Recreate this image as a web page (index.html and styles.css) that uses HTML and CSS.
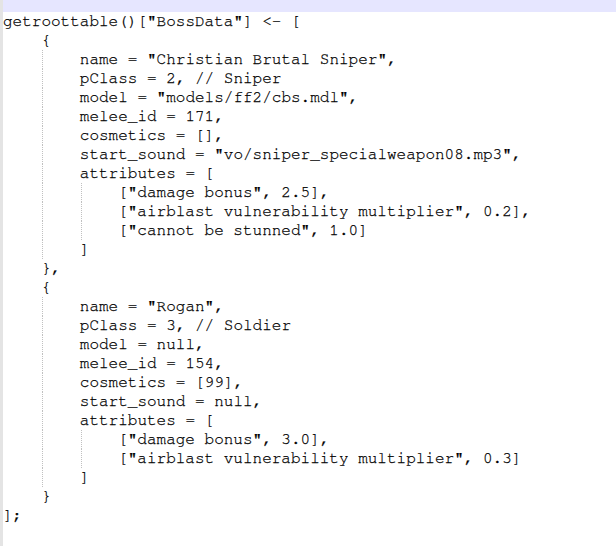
FILE: index.html
```html
<!DOCTYPE html>
<html>
<head>
<meta charset="utf-8">
<link rel="stylesheet" href="styles.css">
</head>
<body>
<div class="editor">
  <div class="gutter"></div>
  <div class="code">
    <div class="band"></div>
    <div class="line">getroottable()["BossData"] &lt;- [</div>
    <div class="line"><span class="ind"></span>{</div>
    <div class="line"><span class="ind"></span><span class="ind g"></span>name = "Christian Brutal Sniper",</div>
    <div class="line"><span class="ind"></span><span class="ind g"></span>pClass = 2, // Sniper</div>
    <div class="line"><span class="ind"></span><span class="ind g"></span>model = "models/ff2/cbs.mdl",</div>
    <div class="line"><span class="ind"></span><span class="ind g"></span>melee_id = 171,</div>
    <div class="line"><span class="ind"></span><span class="ind g"></span>cosmetics = [],</div>
    <div class="line"><span class="ind"></span><span class="ind g"></span>start_sound = "vo/sniper_specialweapon08.mp3",</div>
    <div class="line"><span class="ind"></span><span class="ind g"></span>attributes = [</div>
    <div class="line"><span class="ind"></span><span class="ind g"></span><span class="ind g"></span>["damage bonus", 2.5],</div>
    <div class="line"><span class="ind"></span><span class="ind g"></span><span class="ind g"></span>["airblast vulnerability multiplier", 0.2],</div>
    <div class="line"><span class="ind"></span><span class="ind g"></span><span class="ind g"></span>["cannot be stunned", 1.0]</div>
    <div class="line"><span class="ind"></span><span class="ind g"></span>]</div>
    <div class="line"><span class="ind"></span>},</div>
    <div class="line"><span class="ind"></span>{</div>
    <div class="line"><span class="ind"></span><span class="ind g"></span>name = "Rogan",</div>
    <div class="line"><span class="ind"></span><span class="ind g"></span>pClass = 3, // Soldier</div>
    <div class="line"><span class="ind"></span><span class="ind g"></span>model = null,</div>
    <div class="line"><span class="ind"></span><span class="ind g"></span>melee_id = 154,</div>
    <div class="line"><span class="ind"></span><span class="ind g"></span>cosmetics = [99],</div>
    <div class="line"><span class="ind"></span><span class="ind g"></span>start_sound = null,</div>
    <div class="line"><span class="ind"></span><span class="ind g"></span>attributes = [</div>
    <div class="line"><span class="ind"></span><span class="ind g"></span><span class="ind g"></span>["damage bonus", 3.0],</div>
    <div class="line"><span class="ind"></span><span class="ind g"></span><span class="ind g"></span>["airblast vulnerability multiplier", 0.3]</div>
    <div class="line"><span class="ind"></span><span class="ind g"></span>]</div>
    <div class="line"><span class="ind"></span>}</div>
    <div class="line">];</div>
  </div>
</div>
</body>
</html>
```
FILE: styles.css
```css
html, body {
  margin: 0;
  padding: 0;
  background: #ffffff;
}

.editor {
  display: flex;
  width: 616px;
  height: 546px;
  overflow: hidden;
}

.gutter {
  width: 3px;
  flex: 0 0 3px;
  background: #e4e4e4;
}

.code {
  flex: 1;
  display: flex;
  flex-direction: column;
  font-family: "Nimbus Mono PS", "Nimbus Mono L", "FreeMono", "Courier 10 Pitch", "Courier New", "Liberation Mono", monospace;
  font-size: 16px;
  line-height: 19px;
  color: #000000;
  -webkit-text-stroke: 0.25px #000000;
}

.band {
  flex: 0 0 12px;
  height: 12px;
  background: #e6e6ff;
}

.line {
  flex: 0 0 19px;
  height: 19px;
  white-space: pre;
}

.ind {
  display: inline-block;
  width: 38.4px;
  height: 19px;
  vertical-align: top;
}

.g {
  background-image: repeating-linear-gradient(to bottom, #c0c0c0 0, #c0c0c0 1px, transparent 1px, transparent 2px);
  background-repeat: no-repeat;
  background-position: 1px 0;
  background-size: 1px 100%;
}
```
